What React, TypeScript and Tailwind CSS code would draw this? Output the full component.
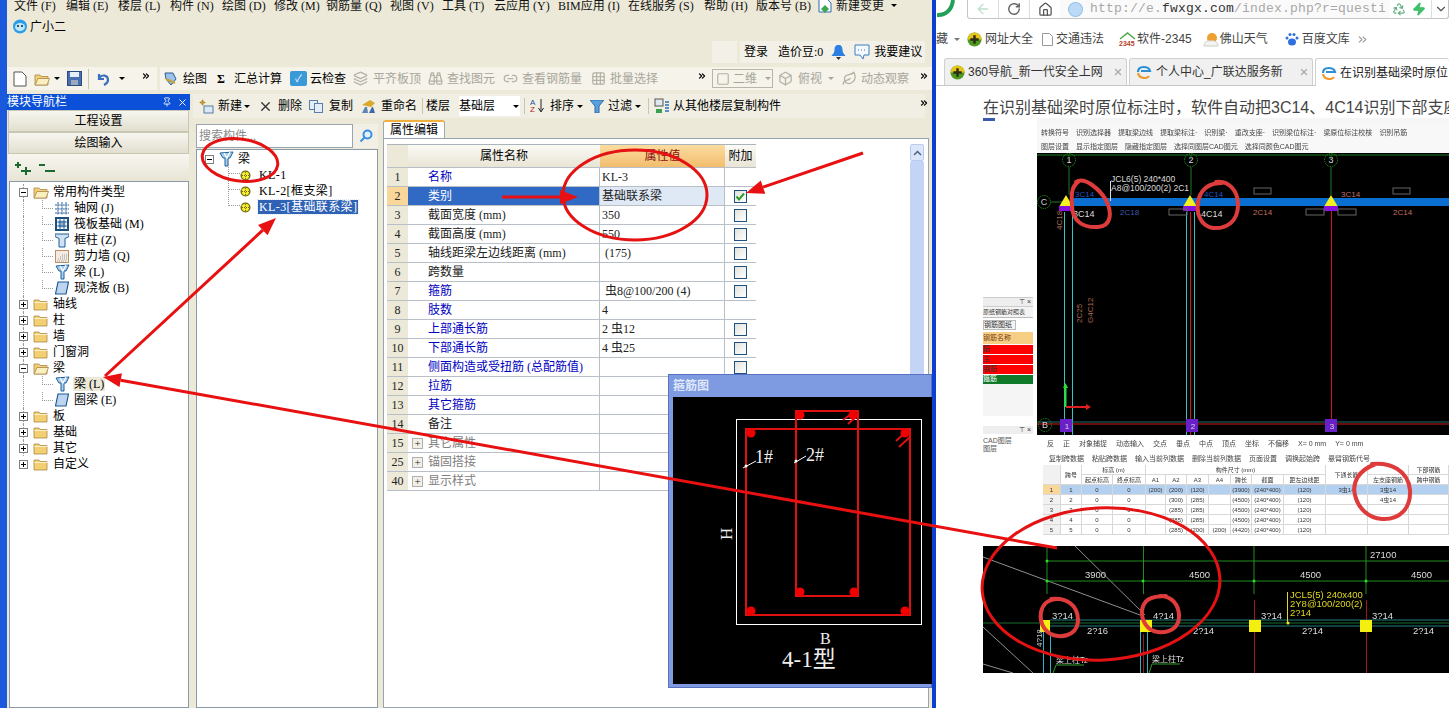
import { ArrowLeft, RotateCw, Home, Zap, Recycle, ChevronDown, Pin, X, ChevronsRight, Layers, Binoculars, Link2, Grid3x3, Box, Leaf, Square } from "lucide-react";

const Caret = ({ className = "" }: { className?: string }) => (
  <span className={`inline-block h-0 w-0 shrink-0 border-x-[3px] border-t-[3px] border-x-transparent border-t-current ${className}`} />
);

const Folder = ({ open = false }: { open?: boolean }) => (
  <svg className="shrink-0" width="16" height="14" viewBox="0 0 16 14">
    <path d="M1 3h5l1 1.500h7v8.500H1z" fill="#f3cf72" stroke="#a8884a" strokeWidth="0.8" />
    {open ? <path d="M1 13l3-6.500h11.500L13 13z" fill="#fbeec0" stroke="#a8884a" strokeWidth="0.8" /> : <path d="M1.500 5.500h13" stroke="#fff3c8" />}
  </svg>
);

const Expander = ({ minus = false }: { minus?: boolean }) => (
  <span className="relative z-10 flex h-[9px] w-[9px] items-center justify-center border border-[#808080] bg-white">
    <span className="absolute h-px w-[5px] bg-black" />
    {!minus && <span className="absolute h-[5px] w-px bg-black" />}
  </span>
);

const BeamIcon = () => (
  <svg width="15" height="16" viewBox="0 0 15 16">
    <path d="M1 2l13-1-3 6H9v8H6V7H4z" fill="#a9d0ee" stroke="#1c5f9e" strokeWidth="1" />
    <path d="M5 2l3 5 3-6" fill="none" stroke="#fff" strokeWidth="1.200" />
  </svg>
);

const GridIcon = () => (
  <svg width="14" height="14" viewBox="0 0 14 14" stroke="#2a5f9e" strokeWidth="1" fill="none">
    <path d="M0 4h14M0 8h14M0 12h14M3 1v13M7 1v13M11 1v13" strokeDasharray="2 .6" />
  </svg>
);

const RaftIcon = () => (
  <svg width="14" height="14" viewBox="0 0 14 14">
    <rect width="14" height="14" fill="#1d4f80" />
    <rect x="2" y="2" width="10" height="10" fill="#fff" />
    <rect x="3.500" y="3.500" width="7" height="7" fill="#8fb3d6" />
    <path d="M5 2v10M9 2v10M2 5h10M2 9h10" stroke="#1d4f80" strokeWidth=".8" />
  </svg>
);

const ColumnIcon = () => (
  <svg width="14" height="15" viewBox="0 0 14 15">
    <path d="M0 1h14v2.500l-4 2V14H4V5.500l-4-2z" fill="#cfe2f5" stroke="#1d5a96" />
  </svg>
);

const WallIcon = () => (
  <svg width="14" height="13" viewBox="0 0 14 13">
    <rect x=".5" y=".5" width="13" height="12" fill="#f4ece2" stroke="#bf8f63" />
    <path d="M2 11h10M3 9h9M5 7h7M7 5h5" stroke="#999" strokeDasharray="1 1" />
  </svg>
);

const SlabIcon = () => (
  <svg width="14" height="14" viewBox="0 0 14 14">
    <path d="M3 1h10.500L11 13H.5z" fill="#bed5f0" stroke="#1d5a96" strokeWidth="1.200" />
  </svg>
);

const Gear = () => (
  <svg width="11" height="11" viewBox="0 0 11 11">
    <circle cx="5.500" cy="5.500" r="5" fill="#6b6b10" />
    <circle cx="5.500" cy="5.500" r="3.700" fill="#f7ec2e" />
    <path d="M5.500 2v7M2 5.500h7" stroke="#6b6b10" strokeDasharray="1 1" />
  </svg>
);

const Logo360 = ({ size = 15 }: { size?: number }) => (
  <svg className="shrink-0" width={size} height={size} viewBox="0 0 16 16">
    <circle cx="8" cy="8" r="7.500" fill="#4e9a1f" />
    <path d="M8 .5a7.500 7.500 0 0 1 7.500 7.500H1A7 7 0 0 1 8 .5z" fill="#e8c51c" />
    <path d="M6.700 3.500h2.600v3.200h3.200v2.600H9.300v3.200H6.700V9.300H3.500V6.700h3.200z" fill="#2d2d1a" />
  </svg>
);

const IeLogo = () => (
  <svg className="shrink-0" width="16" height="14" viewBox="0 0 16 14" fill="none" strokeWidth="2.200">
    <path d="M2 7c0-7 11-6 12-1H5" stroke="#2d8fd6" />
    <path d="M2 8c1 6 9 6 11 3" stroke="#ee9a2c" />
  </svg>
);

const menus = [
  { label: "文件 (F)", w: "w-[52px]" },
  { label: "编辑 (E)", w: "w-[52px]" },
  { label: "楼层 (L)", w: "w-[52px]" },
  { label: "构件 (N)", w: "w-[52px]" },
  { label: "绘图 (D)", w: "w-[52px]" },
  { label: "修改 (M)", w: "w-[52px]" },
  { label: "钢筋量 (Q)", w: "w-[64px]" },
  { label: "视图 (V)", w: "w-[52px]" },
  { label: "工具 (T)", w: "w-[52px]" },
  { label: "云应用 (Y)", w: "w-[64px]" },
  { label: "BIM应用 (I)", w: "w-[70px]" },
  { label: "在线服务 (S)", w: "w-[76px]" },
  { label: "帮助 (H)", w: "w-[52px]" },
  { label: "版本号 (B)", w: "w-[62px]" },
];

type TreeRow = { label: string; kind: "open" | "closed" | "item"; icon?: React.ReactNode; active?: boolean };

const treeRows: TreeRow[] = [
  { label: "常用构件类型", kind: "open" },
  { label: "轴网 (J)", kind: "item", icon: <GridIcon /> },
  { label: "筏板基础 (M)", kind: "item", icon: <RaftIcon /> },
  { label: "框柱 (Z)", kind: "item", icon: <ColumnIcon /> },
  { label: "剪力墙 (Q)", kind: "item", icon: <WallIcon /> },
  { label: "梁 (L)", kind: "item", icon: <BeamIcon /> },
  { label: "现浇板 (B)", kind: "item", icon: <SlabIcon /> },
  { label: "轴线", kind: "closed" },
  { label: "柱", kind: "closed" },
  { label: "墙", kind: "closed" },
  { label: "门窗洞", kind: "closed" },
  { label: "梁", kind: "open" },
  { label: "梁 (L)", kind: "item", icon: <BeamIcon />, active: true },
  { label: "圈梁 (E)", kind: "item", icon: <SlabIcon /> },
  { label: "板", kind: "closed" },
  { label: "基础", kind: "closed" },
  { label: "其它", kind: "closed" },
  { label: "自定义", kind: "closed" },
];

const ModuleTree = () => (
  <div className="h-full bg-white pt-[2px]">
    {treeRows.map((row, i) => (
      <div key={i} className="relative flex h-[16px] items-center">
        {i < treeRows.length - 1 && <span className="absolute left-[13px] top-0 h-full border-l border-dotted border-[#999]" />}
        {row.kind === "item" ? (
          <>
            <span className="absolute left-[32px] top-0 h-[9px] w-[11px] border-b border-l border-dotted border-[#999]" />
            <span className="ml-[44px] flex w-[16px] justify-center">{row.icon}</span>
            <span className={`ml-[3px] px-[1px] ${row.active ? "bg-[#ece9d8]" : ""}`}>{row.label}</span>
          </>
        ) : (
          <>
            <span className="ml-[9px]"><Expander minus={row.kind === "open"} /></span>
            <span className="ml-[5px]"><Folder open={row.kind === "open"} /></span>
            <span className="ml-[4px]">{row.label}</span>
          </>
        )}
      </div>
    ))}
  </div>
);

const NavPanel = () => (
  <div className="flex w-[183px] flex-col">
    <div className="flex h-[16px] items-center justify-between bg-[#0a50d8] pr-[2px] text-white">
      <span>模块导航栏</span>
      <span className="flex items-center gap-[5px]"><Pin size={10} /><X size={11} /></span>
    </div>
    <div className="ml-px mr-[1px] flex h-[22px] items-center justify-center border border-[#c9c6b4] bg-gradient-to-b from-[#f7f6ef] to-[#e2dfcf]">工程设置</div>
    <div className="ml-px mr-[1px] flex h-[22px] items-center justify-center border border-[#c9c6b4] bg-gradient-to-b from-[#f7f6ef] to-[#e2dfcf]">绘图输入</div>
    <div className="ml-px mr-[1px] flex h-[27px] items-center gap-[8px] bg-gradient-to-b from-[#f7f6ef] to-[#e8e5d6] pl-[7px]">
      <svg width="16" height="14" viewBox="0 0 16 14" stroke="#1b6a2f" strokeWidth="2"><path d="M0 4h6M3 1v6M6 10h10M11 6v8" /></svg>
      <svg width="16" height="14" viewBox="0 0 16 14" stroke="#1b6a2f" strokeWidth="2"><path d="M0 4h6M6 10h10" /></svg>
    </div>
    <div className="ml-[2px] mr-[1px] min-h-0 flex-1 border border-[#8a9aa8]">
      <ModuleTree />
    </div>
  </div>
);

const ComponentTree = () => (
  <div className="flex w-[182px] flex-col pt-[4px]">
    <div className="flex h-[24px]">
      <div className="flex flex-1 items-center border border-[#9aa5b1] bg-white pl-[2px] text-[#8a8a8a]">搜索构件...</div>
      <div className="flex w-[25px] items-center justify-center bg-[#f2f0e6]">
        <svg width="14" height="14" viewBox="0 0 14 14" fill="none" stroke="#3a8fe0" strokeWidth="2"><circle cx="8.500" cy="5.500" r="4" fill="#dff0fb" /><path d="M5.500 8.500L1.500 12.500" /></svg>
      </div>
    </div>
    <div className="mt-[1px] min-h-0 flex-1 border border-[#8a9aa8] bg-white pl-[8px] pt-[1px]">
      <div className="flex h-[16px] items-center">
        <Expander minus />
        <span className="ml-[5px]"><BeamIcon /></span>
        <span className="ml-[4px]">梁</span>
      </div>
      {["KL-1", "KL-2[框支梁]", "KL-3[基础联系梁]"].map((name, i) => (
        <div key={name} className="relative flex h-[16px] items-center">
          <span className="absolute left-[23px] top-[-8px] h-[15px] w-[14px] border-b border-l border-dotted border-[#999]" />
          <span className="ml-[35px]"><Gear /></span>
          <span className={`ml-[7px] px-[1px] tracking-[0.4px] ${i === 2 ? "bg-[#2f62b5] text-white outline-1 outline-dotted outline-[#dfe8f5]" : ""}`}>{name}</span>
        </div>
      ))}
    </div>
  </div>
);

type PropRow = { no: string; name: string; value?: string; check?: "on" | "off"; tone: "blue" | "dark" | "gray"; plus?: boolean };

const propRows: PropRow[] = [
  { no: "1", name: "名称", value: "KL-3", tone: "blue" },
  { no: "2", name: "类别", value: "基础联系梁", check: "on", tone: "dark" },
  { no: "3", name: "截面宽度 (mm)", value: "350", check: "off", tone: "dark" },
  { no: "4", name: "截面高度 (mm)", value: "550", check: "off", tone: "dark" },
  { no: "5", name: "轴线距梁左边线距离 (mm)", value: " (175)", check: "off", tone: "dark" },
  { no: "6", name: "跨数量", check: "off", tone: "dark" },
  { no: "7", name: "箍筋", value: " 虫8@100/200 (4)", check: "off", tone: "blue" },
  { no: "8", name: "肢数", value: "4", tone: "blue" },
  { no: "9", name: "上部通长筋", value: "2 虫12", check: "off", tone: "blue" },
  { no: "10", name: "下部通长筋", value: "4 虫25", check: "off", tone: "blue" },
  { no: "11", name: "侧面构造或受扭筋 (总配筋值)", check: "off", tone: "blue" },
  { no: "12", name: "拉筋", tone: "blue" },
  { no: "13", name: "其它箍筋", tone: "blue" },
  { no: "14", name: "备注", tone: "dark" },
  { no: "15", name: "其它属性", tone: "gray", plus: true },
  { no: "25", name: "锚固搭接", tone: "gray", plus: true },
  { no: "40", name: "显示样式", tone: "gray", plus: true },
];

const toneClass = { blue: "text-[#0000c0]", dark: "text-[#222]", gray: "text-[#808080]" };

const CheckBox = ({ on }: { on: boolean }) => (
  <span className="flex h-[13px] w-[13px] items-center justify-center border border-[#1c5180] bg-gradient-to-br from-[#e2e2dc] to-white">
    {on && <svg width="11" height="11" viewBox="0 0 11 11" fill="none" stroke="#2f9e2a" strokeWidth="2"><path d="M1.500 5.500l2.500 3 5-6" /></svg>}
  </span>
);

const PropTable = () => (
  <div className="w-[369px] border-t border-[#aab4bd]">
    <div className="flex h-[23px] border-b border-[#b8bfc6]">
      <div className="w-[21px] bg-[#ece9d8]" />
      <div className="flex w-[192px] items-center justify-center bg-gradient-to-b from-[#fbfaf4] to-[#e8e5d6]">属性名称</div>
      <div className="flex w-[125px] items-center justify-center bg-gradient-to-b from-[#fbdc9f] to-[#f2bd6d] text-[#8a1010]">属性值</div>
      <div className="flex w-[31px] items-center justify-center bg-gradient-to-b from-[#fbfaf4] to-[#e8e5d6]">附加</div>
    </div>
    {propRows.map((row) => {
      const selected = row.no === "2";
      return (
        <div key={row.no} className="flex h-[19px] border-b border-[#b8bfc6]">
          <div className={`flex w-[21px] items-center justify-center text-[#222] ${selected ? "bg-[#f9d79b]" : "bg-[#ece9d8]"}`}>{row.no}</div>
          <div className={`flex w-[192px] items-center border-r border-[#b8bfc6] ${selected ? "bg-[#316ac5] text-white" : toneClass[row.tone]}`}>
            {row.plus ? (
              <span className="ml-[4px] mr-[5px] flex h-[11px] w-[11px] items-center justify-center border border-[#b0b0b0] bg-[#f1efe6] text-[11px] leading-none text-[#222]">+</span>
            ) : <span className="w-[20px]" />}
            {row.name}
          </div>
          <div className={`flex w-[125px] items-center whitespace-pre border-r border-[#b8bfc6] pl-[2px] text-[#222] ${selected ? "bg-[#dfe9f6]" : ""}`}>{row.value}</div>
          <div className="flex w-[31px] items-center justify-center">{row.check && <CheckBox on={row.check === "on"} />}</div>
        </div>
      );
    })}
  </div>
);

const PropertyPanel = () => (
  <div className="ml-[5px] flex w-[546px] flex-col">
    <div className="flex h-[18px] w-[62px] items-center justify-center rounded-t-[3px] border-x border-t-2 border-x-[#a0a8ad] border-t-[#f0b040] bg-white">属性编辑</div>
    <div className="flex min-h-0 flex-1 border border-[#98a5b0] bg-white pl-[3px] pt-[5px]">
      <PropTable />
      <div className="ml-[154px] flex w-[14px] flex-col">
        <div className="flex h-[17px] items-center justify-center rounded-[2px] border border-[#b8ccec] bg-[#dbe6fa]">
          <svg width="9" height="6" viewBox="0 0 9 6" fill="none" stroke="#4d6185" strokeWidth="1.500"><path d="M1 5l3.500-3.500L8 5" /></svg>
        </div>
        <div className="h-[520px] rounded-[2px] bg-[#c3d4f7]" />
      </div>
    </div>
  </div>
);

const greyIcon = "shrink-0 text-[#b4b2a6]";

const MainToolbar = () => (
  <div className="flex h-[23px] items-center whitespace-nowrap">
    <div className="flex h-full w-[150px] items-center bg-[#f5f3ea] pl-[6px]">
      <svg className="shrink-0" width="14" height="16" viewBox="0 0 14 16"><path d="M1 1h8l4 4v10H1z" fill="#fff" stroke="#555" /></svg>
      <span className="ml-[7px]"><Folder open /></span>
      <Caret className="ml-[4px] text-black" />
      <svg className="ml-[7px] shrink-0" width="15" height="15" viewBox="0 0 15 15"><rect x=".5" y=".5" width="14" height="14" fill="#4a6fb0" stroke="#2b4a80" /><rect x="3" y="1" width="9" height="5" fill="#e8eef8" /><rect x="4" y="9" width="7" height="5" fill="#9ab" /></svg>
      <span className="ml-[6px] h-[20px] border-l border-[#c8c5b2]" />
      <svg className="ml-[7px] shrink-0" width="14" height="14" viewBox="0 0 14 14" fill="none" stroke="#3a6fc0" strokeWidth="2.200"><path d="M3 2v5h5M3 6c3-4 9-3 9 2 0 3-2 4-4 5" /></svg>
      <Caret className="ml-[9px] text-black" />
      <ChevronsRight size={10} strokeWidth={3} className="-mt-[6px] ml-[16px] shrink-0 text-black" />
    </div>
    <div className="ml-[3px] flex h-full w-[547px] items-center bg-[#f5f3ea] pl-[3px]">
      <svg className="shrink-0" width="15" height="15" viewBox="0 0 15 15"><path d="M2 2h8l3 6-5 6-5-6z" fill="#9cc3e8" stroke="#2d5f96" /><path d="M3 8l9 4" stroke="#c8a038" strokeWidth="2" /></svg>
      <span className="ml-[5px]">绘图</span>
      <span className="ml-[10px] w-[8px] font-bold">Σ</span>
      <span className="ml-[9px]">汇总计算</span>
      <span className="ml-[8px] flex h-[15px] w-[17px] shrink-0 items-center justify-center rounded-[2px] bg-[#3a9ad8] text-[10px] text-white">✓</span>
      <span className="ml-[3px]">云检查</span>
      <Layers size={15} className={`ml-[7px] ${greyIcon}`} />
      <span className="ml-[5px] text-[#a8a69a]">平齐板顶</span>
      <Binoculars size={15} className={`ml-[7px] ${greyIcon}`} />
      <span className="ml-[4px] text-[#a8a69a]">查找图元</span>
      <Link2 size={15} className={`ml-[8px] ${greyIcon}`} />
      <span className="ml-[4px] text-[#a8a69a]">查看钢筋量</span>
      <Grid3x3 size={15} className={`ml-[9px] ${greyIcon}`} />
      <span className="ml-[4px] text-[#a8a69a]">批量选择</span>
      <ChevronsRight size={10} strokeWidth={3} className="-mt-[6px] ml-[39px] shrink-0 text-black" />
    </div>
    <div className="flex h-full flex-1 items-center bg-[#f5f3ea] pl-[5px] text-[#a8a69a]">
      <span className="flex h-[19px] w-[61px] shrink-0 items-center border border-[#b8b6a8] pl-[3px]">
        <Square size={14} className={greyIcon} />
        <span className="ml-[3px]">二维</span>
        <Caret className="ml-[8px]" />
      </span>
      <Box size={15} className={`ml-[5px] ${greyIcon}`} />
      <span className="ml-[5px]">俯视</span>
      <Caret className="ml-[6px]" />
      <Leaf size={15} className={`ml-[8px] ${greyIcon}`} />
      <span className="ml-[4px]">动态观察</span>
      <ChevronsRight size={10} strokeWidth={3} className="-mt-[6px] ml-[10px] shrink-0 text-black" />
    </div>
  </div>
);

const SecondToolbar = () => (
  <div className="flex h-[24px] w-[732px] items-center whitespace-nowrap bg-[#f1efe4] pl-[5px]">
    <svg className="shrink-0" width="16" height="16" viewBox="0 0 16 16"><path d="M2 4h2V2h1v2h2v1H5v2H4V5H2z" fill="#d8a820" stroke="#a07810" strokeWidth=".6" /><rect x="6" y="8" width="9" height="7" fill="#dbe8f7" stroke="#5a7aa0" /></svg>
    <span className="ml-[4px]">新建</span>
    <Caret className="ml-[2px] text-black" />
    <X size={15} strokeWidth={2.200} className="ml-[8px] shrink-0 text-[#333]" />
    <span className="ml-[5px]">删除</span>
    <svg className="ml-[7px] shrink-0" width="14" height="13" viewBox="0 0 14 13" fill="#e4edf8" stroke="#5a7ea8"><rect x=".5" y=".5" width="8" height="9" /><rect x="5.500" y="3.500" width="8" height="9" /></svg>
    <span className="ml-[6px]">复制</span>
    <svg className="ml-[8px] shrink-0" width="15" height="15" viewBox="0 0 15 15"><path d="M1 6l8-5 5 3-4 4z" fill="#d9a92c" /><path d="M1 14l3-6h2l1 6z" fill="#5a86b8" /><path d="M8 14l3-6h1l2 6z" fill="#3a6aa8" /></svg>
    <span className="ml-[5px]">重命名</span>
    <span className="ml-[5px] h-[16px] border-l border-[#c8c5b2]" />
    <span className="ml-[3px]">楼层</span>
    <span className="ml-[9px] flex h-[20px] w-[61px] shrink-0 items-center bg-white">基础层<Caret className="ml-[18px] text-black" /></span>
    <span className="ml-[4px] h-[16px] border-l border-[#c8c5b2]" />
    <svg className="ml-[5px] shrink-0" width="14" height="16" viewBox="0 0 14 16"><text x="0" y="7" fontSize="8" fill="#1d4ea0" fontFamily="Liberation Sans">A</text><text x="0" y="14" fontSize="8" fill="#b02020" fontFamily="Liberation Sans">Z</text><path d="M11 1v12M8.500 10l2.500 4 2.500-4" stroke="#222" fill="none" /></svg>
    <span className="ml-[6px]">排序</span>
    <Caret className="ml-[3px] text-black" />
    <svg className="ml-[7px] shrink-0" width="14" height="13" viewBox="0 0 14 13"><path d="M0 0h14L9 6v7H5V6z" fill="#5aa0dc" stroke="#2b6aa8" /></svg>
    <span className="ml-[4px]">过滤</span>
    <Caret className="ml-[3px] text-black" />
    <span className="ml-[7px] h-[16px] border-l border-[#c8c5b2]" />
    <svg className="ml-[5px] shrink-0" width="16" height="16" viewBox="0 0 16 16"><rect x="1" y="1" width="8" height="7" fill="#dfe8ef" stroke="#555" /><path d="M2 11h6v4H2z" fill="#3aa050" /><path d="M11 4h4M11 7h4M11 10h4M11 13h4" stroke="#2f6fb5" strokeWidth="1.500" /></svg>
    <span className="ml-[3px]">从其他楼层复制构件</span>
    <ChevronsRight size={10} strokeWidth={3} className="-mt-[6px] ml-[138px] shrink-0 text-black" />
  </div>
);

const AppWindow = () => (
  <div className="flex h-[708px] w-[932px] flex-col border-l-[7px] border-[#1a58dc] bg-[#ece9d8] text-[12px] leading-[14px]">
    <div className="-mt-[2px] flex h-[15px] items-center whitespace-nowrap pl-[7px] text-[#111]">
      {menus.map((m) => <span key={m.label} className={m.w}>{m.label}</span>)}
      <span className="flex items-center gap-[4px]">
        <svg width="14" height="15" viewBox="0 0 14 15"><path d="M1 1h8l4 4v9H1z" fill="#fff" stroke="#2d6fb0" /><path d="M7 7l4 4-4 4-4-4z" fill="#3aa850" /></svg>
        新建变更
      </span>
      <Caret className="ml-[7px] text-black" />
    </div>
    <div className="mt-[5px] flex h-[17px] items-center pl-[5px]">
      <svg width="16" height="15" viewBox="0 0 16 15"><circle cx="8" cy="7.500" r="7" fill="#2c9be8" /><ellipse cx="8" cy="8" rx="5" ry="4" fill="#bfe8fb" /><circle cx="6" cy="7" r="1" fill="#123" /><circle cx="10" cy="7" r="1" fill="#123" /></svg>
      <span className="ml-[2px]">广小二</span>
    </div>
    <div className="mt-[6px] flex h-[22px] items-center pl-[705px]">
      <span className="h-full w-[25px] bg-[#f3f1e7]" />
      <div className="ml-[3px] flex h-full w-[185px] items-center whitespace-nowrap bg-[#f3f1e7] pl-[4px]">
        <span>登录</span>
        <span className="ml-[10px]">造价豆:0</span>
        <svg className="ml-[8px]" width="15" height="16" viewBox="0 0 15 16"><path d="M7.500 1c3 0 4 2 4 5 0 3 2 4 3 6H.5c1-2 3-3 3-6 0-3 1-5 4-5z" fill="#2a7fe0" /><path d="M5 13h5l-2.500 3z" fill="#333" /></svg>
        <svg className="ml-[8px]" width="16" height="16" viewBox="0 0 16 16" fill="#f3f8fd" stroke="#3d7cc0"><path d="M1 1h14v10H10l-1 4-3-4H1z" /><path d="M4 6h1M7 6h1M10 6h1" /></svg>
        <span className="ml-[4px]">我要建议</span>
      </div>
    </div>
    <div className="mt-[4px]"><MainToolbar /></div>
    <div className="mt-[4px] flex min-h-0 flex-1">
      <NavPanel />
      <div className="ml-[3px] flex min-w-0 flex-1 flex-col">
        <SecondToolbar />
        <div className="mt-[2px] flex min-h-0 flex-1 pl-[3px]">
          <ComponentTree />
          <PropertyPanel />
        </div>
      </div>
    </div>
  </div>
);

const CadTop = () => (
  <svg className="block" width="412" height="282" viewBox="1037 153 412 282" fontFamily="Liberation Sans">
    <rect x="1037" y="153" width="412" height="282" fill="#000" />
    <path d="M1037 155h412" stroke="#1f7a1f" />
    {[[1069, "1"], [1191, "2"], [1331, "3"]].map(([x, t]) => (
      <g key={t as string}>
        <circle cx={x as number} cy="160" r="6.500" fill="none" stroke="#1f8a1f" strokeDasharray="1.500 1" />
        <text x={x as number} y="163" fontSize="9" fill="#ddd" textAnchor="middle">{t}</text>
        <path d={`M${x} 155v4M${x} 167v28`} stroke="#1f7a1f" />
      </g>
    ))}
    <circle cx="1044" cy="202" r="6.500" fill="none" stroke="#1f8a1f" strokeDasharray="1.500 1" />
    <text x="1044" y="205" fontSize="9" fill="#ccc" textAnchor="middle">C</text>
    <path d="M1051 202h16" stroke="#1f7a1f" />
    <rect x="1070" y="198" width="379" height="8" fill="#0a6fd0" />
    <path d="M1064.500 212v223M1072.500 212v223M1186.500 212v223M1194.500 212v223" stroke="#32c4c4" />
    <path d="M1190.500 212v223M1331.500 206v223" stroke="#d01818" />
    {[1066, 1190, 1331].map((x) => (
      <g key={x}>
        <rect x={x - 7} y="206" width="14" height="5" fill="#8a10e0" />
        <path d={`M${x} 195l6.500 11h-13z`} fill="#f5f020" />
      </g>
    ))}
    <text x="1111" y="182" fontSize="8.500" fill="#ddd">JCL6(5) 240*400</text>
    <text x="1111" y="191" fontSize="8.500" fill="#ddd">A8@100/200(2) 2C1</text>
    <path d="M1110.500 181v20" stroke="#ddd" />
    <text x="1075" y="197" fontSize="8" fill="#1e55c8">3C14</text>
    <text x="1204" y="197" fontSize="8" fill="#1e55c8">4C14</text>
    <text x="1341" y="197" fontSize="8" fill="#c07060">3C14</text>
    <text x="1073" y="217" fontSize="9" fill="#ddd">3C14</text>
    <text x="1201" y="217" fontSize="9" fill="#ddd">4C14</text>
    <text x="1120" y="215" fontSize="8" fill="#3a5ab0">2C18</text>
    <text x="1253" y="215" fontSize="8" fill="#c07060">2C14</text>
    <text x="1393" y="215" fontSize="8" fill="#c07060">2C14</text>
    {[[1169, 209, 18], [1254, 188, 17], [1306, 209, 18], [1338, 209, 18], [1393, 188, 17]].map(([x, y, w]) => (
      <rect key={`${x}-${y}`} x={x} y={y} width={w} height="6" fill="none" stroke="#666" />
    ))}
    <text transform="translate(1062 230) rotate(-90)" fontSize="8" fill="#b06858">4C18</text>
    <text transform="translate(1082 323) rotate(-90)" fontSize="8" fill="#b06858">2C25</text>
    <text transform="translate(1093 323) rotate(-90)" fontSize="8" fill="#b06858">G4C12</text>
    <path d="M1065.500 407v-22" stroke="#28e030" strokeWidth="2" />
    <path d="M1063 388l2.500-5 2.500 5z" fill="#28e030" />
    <path d="M1066 407h22" stroke="#e02020" strokeWidth="2" />
    <path d="M1086 404l5 3-5 3z" fill="#e02020" />
    <path d="M1037 424h412" stroke="#d01818" />
    <path d="M1037 422h412" stroke="#1f6a6a" />
    <circle cx="1045" cy="425" r="6.500" fill="none" stroke="#1f8a1f" strokeDasharray="1.500 1" />
    <text x="1045" y="428" fontSize="9" fill="#ccc" textAnchor="middle">B</text>
    {[[1066, "1"], [1192, "2"], [1331, "3"]].map(([x, t]) => (
      <g key={t as string}>
        <rect x={(x as number) - 6} y="419" width="12" height="13" fill="#6a20c8" />
        <text x={(x as number) + 1} y="429" fontSize="8" fill="#ddd" textAnchor="middle">{t}</text>
      </g>
    ))}
  </svg>
);

const CadBottom = () => (
  <svg className="block" width="466" height="127" viewBox="983 546 466 127" fontFamily="Liberation Sans">
    <rect x="983" y="546" width="466" height="127" fill="#000" />
    <path d="M983 557l157 58M1075 546l70 69M983 627l50 46M983 664l30 9" stroke="#ccc" strokeWidth=".7" />
    <path d="M1047 546v48M1143.500 546v48M1254 546v48M1366 546v48M1047 561h402M1047 581h402" stroke="#28b028" strokeWidth=".8" />
    {[1047, 1143, 1254, 1366].map((x) => <circle key={x} cx={x} cy="581" r="1.500" fill="#28e028" />)}
    <circle cx="1047" cy="561" r="1.500" fill="#28e028" />
    <path d="M983 623h466" stroke="#1f8a3a" strokeWidth=".8" />
    <path d="M1050 620h399M1050 626h399" stroke="#2c9ca0" strokeWidth=".8" />
    <path d="M1254.500 600v73M1366.500 600v73M1143.500 634v39" stroke="#a01818" />
    <path d="M1043.500 632v41M1050.500 632v41M1140.500 632v41M1147.500 632v41" stroke="#32b4c4" />
    {[[1040, 10], [1140, 12], [1249, 12], [1360, 12]].map(([x, w]) => <rect key={x} x={x} y="620" width={w} height="12" fill="#f5ef10" />)}
    {[[1085, 578, "3900"], [1189, 578, "4500"], [1300, 578, "4500"], [1411, 578, "4500"], [1370, 558, "27100"], [1052, 619, "3?14"], [1153, 619, "4?14"], [1261, 619, "3?14"], [1372, 619, "3?14"], [1087, 634, "2?16"], [1193, 634, "2?14"], [1302, 634, "2?14"], [1413, 634, "2?14"]].map(([x, y, t]) => (
      <text key={`${x}-${t}`} x={x as number} y={y as number} fontSize="9.500" fill="#ddd">{t}</text>
    ))}
    <path d="M1287.500 592v30" stroke="#e0d820" />
    <circle cx="1288" cy="623" r="1.500" fill="#f0e820" />
    <text x="1290" y="598" fontSize="9.500" fill="#e0d820">JCL5(5) 240x400</text>
    <text x="1290" y="607" fontSize="9.500" fill="#e0d820">2Y8@100/200(2)</text>
    <text x="1290" y="616" fontSize="9.500" fill="#e0d820">2?14</text>
    <text transform="translate(1042 647) rotate(-90)" fontSize="8" fill="#ccc">4?18</text>
    <text x="1056" y="663" fontSize="8" fill="#ddd" fontFamily="Noto Sans CJK SC">梁上柱Tz</text>
    <text x="1152" y="662" fontSize="8" fill="#ddd" fontFamily="Noto Sans CJK SC">梁上柱Tz</text>
    <path d="M1056 665h28M1056 665l-3 8M1152 664h28M1152 664l-3 9" stroke="#28a028" fill="none" />
  </svg>
);

const EmbedTable = () => {
  const cols = "grid-cols-[18px_21px_31px_33px_20px_21px_22px_22px_21px_32px_42px_42px_41px_40px]";
  const cell = "flex items-center justify-center overflow-hidden whitespace-nowrap border-b border-r border-[#d8d8d8]";
  const rows = [
    ["1", "1", "0", "0", "(200)", "(200)", "(120)", "", "(3900)", "(240*400)", "(120)", "3虫14", "3虫14", ""],
    ["2", "2", "0", "0", "", "(300)", "(285)", "", "(4500)", "(240*400)", "(120)", "", "4虫14", ""],
    ["3", "3", "0", "0", "", "(285)", "(285)", "", "(4500)", "(240*400)", "(120)", "", "", ""],
    ["4", "4", "0", "0", "", "(285)", "(285)", "", "(4500)", "(240*400)", "(120)", "", "", ""],
    ["5", "5", "0", "0", "", "(285)", "(200)", "(200)", "(4420)", "(240*400)", "(120)", "", "", ""],
  ];
  return (
    <div className={`grid ${cols} auto-rows-[10px] text-[6px] leading-none text-[#333]`}>
      <div className={`${cell} row-span-2 bg-[#f1f1f1]`} />
      <div className={`${cell} row-span-2`}>跨号</div>
      <div className={`${cell} col-span-2`}>标高 (m)</div>
      <div className={`${cell} col-span-7`}>构件尺寸 (mm)</div>
      <div className={`${cell} row-span-2`}>下通长筋</div>
      <div className={cell} />
      <div className={cell}>下部钢筋</div>
      {["起点标高", "终点标高", "A1", "A2", "A3", "A4", "跨长", "截面", "距左边线距", "左支座钢筋", "跨中钢筋"].map((h) => <div key={h} className={cell}>{h}</div>)}
      {rows.map((row, r) => row.map((c, i) => (
        <div key={`${r}-${i}`} className={`${cell} ${r === 0 ? (i === 0 ? "bg-[#f9d79b]" : "bg-[#b4d0f0]") : i === 0 ? "bg-[#f1f1f1]" : ""}`}>{c}</div>
      )))}
    </div>
  );
};

const SmallTool = ({ items, className = "" }: { items: string[]; className?: string }) => (
  <div className={`flex items-center whitespace-nowrap text-[7px] text-[#444] ${className}`}>
    {items.map((t) => <span key={t}>{t}</span>)}
  </div>
);

const SidePanel = () => (
  <div className="w-[50px] text-[7px] leading-[8px] text-[#333]">
    <div className="flex h-[10px] items-center justify-end border-y border-[#ccc] bg-[#eee] pr-[2px]">⊤ ×</div>
    <div className="flex h-[11px] items-center whitespace-nowrap border-b border-[#bbb] bg-[#f4f4f4] text-[6px]">原纸钢筋对照表</div>
    <div className="flex h-[14px] items-center"><span className="border border-[#bbb] bg-[#f4f4f4] pr-[3px]">钢筋图纸</span></div>
    <div className="flex h-[12px] items-center bg-[#f6cf85] text-[#7a3a10]">钢筋名称</div>
    <div className="mt-[1px] h-[9px] bg-[#ff0000]">筋</div>
    <div className="mt-[1px] h-[9px] bg-[#ff0000]">主</div>
    <div className="mt-[1px] h-[9px] bg-[#ff0000]">钢筋</div>
    <div className="mt-[1px] h-[9px] bg-[#0f7a2a] text-white">箍筋</div>
    <div className="h-[32px] bg-[#f5f5f5]" />
    <div className="mt-[10px] flex h-[8px] items-center justify-end bg-[#eee] pr-[2px]">⊤ ×</div>
    <div className="mt-[3px] text-[#555]">CAD图层<br />图层</div>
  </div>
);

const Browser = () => (
  <div className="flex h-[708px] w-[513px] flex-col overflow-hidden bg-white font-['Liberation_Sans','Noto_Sans_CJK_SC',sans-serif] text-[12px] leading-[14px] text-[#333]">
    <div className="flex h-[20px] items-start">
      <svg className="ml-[1px] shrink-0" width="20" height="20" viewBox="0 0 20 20" fill="none" stroke="#22a05a" strokeWidth="4"><path d="M0 15c8 1 15-5 16-15" /></svg>
      <div className="ml-[10px] flex h-[19px] flex-1 items-center rounded-b-[3px] border-x border-b border-[#c4c4c4]">
        <span className="flex h-full w-[31px] items-center justify-center border-r border-[#ddd]"><ArrowLeft size={16} className="text-[#bfe0cc]" /></span>
        <span className="flex h-full w-[31px] items-center justify-center border-r border-[#ddd]"><RotateCw size={14} strokeWidth={2.500} className="text-[#666]" /></span>
        <span className="flex h-full w-[30px] items-center justify-center"><Home size={15} className="text-[#555]" /></span>
        <span className="flex h-full flex-1 items-center whitespace-nowrap bg-[#fafafa] pl-[9px] font-['Liberation_Mono',monospace] text-[13px] tracking-[0.2px] text-[#a8a8a8]">
          <span className="mr-[8px] inline-block h-[13px] w-[13px] rounded-full bg-[#bcdaf5] ring-1 ring-[#8fc0ea]" />
          http://e.<span className="text-[#333]">fwxgx.com</span>/index.php?r=questi
        </span>
        <Recycle size={14} className="ml-[2px] shrink-0 text-[#5fae80]" />
        <Zap size={14} fill="#3fc06a" className="ml-[6px] shrink-0 text-[#3fc06a]" />
        <span className="ml-[5px] h-full border-l border-[#ddd]" />
        <ChevronDown size={14} className="ml-[2px] shrink-0 text-[#555]" />
      </div>
    </div>
    <div className="mt-[10px] flex h-[18px] items-center whitespace-nowrap text-[#444]">
      <span>藏</span>
      <Caret className="ml-[6px] text-[#777]" />
      <span className="ml-[7px]"><Logo360 /></span>
      <span className="ml-[3px]">网址大全</span>
      <svg className="ml-[9px]" width="11" height="13" viewBox="0 0 11 13" fill="#fff" stroke="#999"><path d="M.5.5h7l3 3v9H.5z" /></svg>
      <span className="ml-[3px]">交通违法</span>
      <svg className="ml-[15px]" width="17" height="16" viewBox="0 0 17 16" fill="none"><path d="M1 8l7.500-6L16 8" stroke="#4aa84a" strokeWidth="1.500" /><text x="0" y="15" fontSize="7" fill="#b8401f" fontFamily="Liberation Sans" fontWeight="700">2345</text></svg>
      <span className="ml-[1px]">软件-2345</span>
      <svg className="ml-[11px]" width="16" height="15" viewBox="0 0 16 15"><circle cx="9" cy="6" r="5" fill="#f0a030" /><path d="M1 14c0-4 4-6 7-5 3-1 7 1 7 5z" fill="#f4f4f0" stroke="#ccc" /></svg>
      <span className="ml-[1px]">佛山天气</span>
      <svg className="ml-[17px]" width="14" height="14" viewBox="0 0 14 14" fill="#2f6fe0"><ellipse cx="7" cy="10" rx="4" ry="3.500" /><circle cx="2" cy="6" r="1.500" /><circle cx="5" cy="2.500" r="1.500" /><circle cx="9" cy="2.500" r="1.500" /><circle cx="12" cy="6" r="1.500" /></svg>
      <span className="ml-[3px]">百度文库</span>
      <ChevronsRight size={13} className="ml-[6px] text-[#999]" />
    </div>
    <div className="mt-[10px] flex h-[28px] items-end whitespace-nowrap border-b border-[#c8c8c8] pl-[8px]">
      <div className="flex h-[27px] w-[183px] items-center rounded-t-[3px] border-x border-t border-[#cfcfcf] bg-[#f0f0f0] pl-[5px]">
        <Logo360 />
        <span className="ml-[3px] w-[140px]">360导航_新一代安全上网</span>
        <X size={10} strokeWidth={3} className="ml-[5px] shrink-0 text-[#aaa]" />
      </div>
      <div className="ml-[2px] flex h-[27px] w-[184px] items-center rounded-t-[3px] border-x border-t border-[#cfcfcf] bg-[#f0f0f0] pl-[6px]">
        <IeLogo />
        <span className="ml-[4px] w-[134px]">个人中心_广联达服务新</span>
        <X size={10} strokeWidth={3} className="ml-[9px] shrink-0 text-[#aaa]" />
      </div>
      <div className="-mb-px ml-[2px] flex h-[28px] flex-1 items-center rounded-t-[3px] border-l border-t border-[#cfcfcf] bg-white pl-[5px] text-[#222]">
        <IeLogo />
        <span className="ml-[3px]">在识别基础梁时原位</span>
      </div>
    </div>
    <div className="mt-[11px] h-[21px] whitespace-nowrap pl-[47px] text-[16px] leading-[21px] text-[#444]">
      在识别基础梁时原位标注时，软件自动把3C14、4C14识别下部支座
    </div>
    <div className="flex h-[428px]">
      <div className="w-[101px] pl-[47px]">
        <div className="h-[3px] w-[12px] bg-[#3a5ab0]" />
        <div className="mt-[176px]"><SidePanel /></div>
      </div>
      <div className="w-[412px] blur-[0.3px]">
        <div className="h-[7px] bg-[#f6f6f6]" />
        <SmallTool className="h-[15px] gap-[7px] bg-[#f8f8f8] pl-[4px]" items={["转换符号", "识别选择器", "提取梁边线", "提取梁标注·", "识别梁·", "重改支座·", "识别梁位标注·", "梁原位标注校核", "识别吊筋"]} />
        <SmallTool className="h-[13px] gap-[7px] bg-[#f8f8f8] pl-[4px]" items={["图层设置", "显示指定图层", "隐藏指定图层", "选择同图层CAD图元", "选择同颜色CAD图元"]} />
        <CadTop />
        <SmallTool className="h-[17px] gap-[9px] pl-[10px]" items={["反", "正", "对象捕捉", "动态输入", "交点", "垂点", "中点", "顶点", "坐标", "不偏移", "X= 0 mm", "Y= 0 mm"]} />
        <SmallTool className="h-[13px] gap-[8px] pl-[12px]" items={["复制跨数据", "粘贴跨数据", "输入当前列数据", "删除当前列数据", "页面设置", "调换起始跨", "悬臂钢筋代号"]} />
        <div className="pl-[6px]"><EmbedTable /></div>
      </div>
    </div>
    <div className="pl-[47px] blur-[0.3px]"><CadBottom /></div>
  </div>
);

const StirrupPopup = () => (
  <div className="absolute left-[668px] top-[374px] z-20 flex h-[314px] w-[264px] flex-col border border-[#5a70c0] bg-[#7e9ae0] px-[4px] pb-[3px]">
    <div className="flex h-[22px] items-center text-[12px] font-bold text-[#dfe7fb]">箍筋图</div>
    <svg className="block flex-1" width="259" height="287" viewBox="673 397 259 287" fontFamily="Liberation Serif">
      <rect x="673" y="397" width="259" height="287" fill="#000" />
      <rect x="736.500" y="419.500" width="185" height="205" fill="none" stroke="#fff" />
      <g fill="none" stroke="#e01010" strokeWidth="2">
        <rect x="746" y="429" width="164" height="186" />
        <rect x="796" y="411" width="62" height="185" />
        <path d="M896 441l12-11M899 447l11-10M843 420l12-9M848 424l9-8" />
      </g>
      {[[751, 433], [905, 433], [751, 611], [905, 611], [800, 415], [853, 415], [800, 592], [854, 592]].map(([x, y]) => (
        <circle key={`${x}-${y}`} cx={x} cy={y} r="4.500" fill="#f00000" />
      ))}
      <path d="M743 468l13-7M794 463l12-7" stroke="#fff" />
      <circle cx="746" cy="466" r="1.500" fill="#fff" />
      <circle cx="796" cy="461" r="1.500" fill="#fff" />
      <text x="755" y="463" fontSize="18" fill="#eee">1#</text>
      <text x="806" y="461" fontSize="18" fill="#eee">2#</text>
      <text transform="translate(732 540) rotate(-90)" fontSize="17" fill="#eee">H</text>
      <text x="820" y="644" fontSize="16" fill="#eee">B</text>
      <text x="782" y="667" fontSize="23" fill="#eee" fontFamily="Liberation Serif, Noto Sans CJK SC">4-1型</text>
    </svg>
  </div>
);

const arrows = [
  [863, 153, 746, 193],
  [502, 197, 578, 197],
  [105, 376, 276, 218],
  [1057, 548, 103, 377],
];

const Annotations = () => (
  <svg className="pointer-events-none absolute left-0 top-0 z-30" width="1449" height="708" viewBox="0 0 1449 708" fill="none">
    <g stroke="#e41212" strokeWidth="3">
      <ellipse cx="240" cy="160" rx="38" ry="21" transform="rotate(8 240 160)" />
      <ellipse cx="635" cy="195" rx="72" ry="45" />
      <ellipse cx="1101" cy="584" rx="119" ry="76" transform="rotate(-3 1101 584)" />
    </g>
    {arrows.map(([x1, y1, x2, y2]) => {
      const len = Math.hypot(x2 - x1, y2 - y1);
      const ux = (x2 - x1) / len;
      const uy = (y2 - y1) / len;
      const bx = x2 - ux * 18;
      const by = y2 - uy * 18;
      return (
        <g key={`${x1}-${y1}`}>
          <path d={`M${x1} ${y1}L${bx} ${by}`} stroke="#e81010" strokeWidth="3" />
          <polygon points={`${x2},${y2} ${bx - uy * 7},${by + ux * 7} ${bx + uy * 7},${by - ux * 7}`} fill="#e81010" />
        </g>
      );
    })}
    <g stroke="#de3c3c" strokeWidth="4" strokeLinecap="round">
      <path d="M1076 182C1085 176 1100 190 1106 200 1112 212 1112 226 1098 227 1084 228 1072 222 1072 205 1071 193 1072 186 1079 181" />
      <path d="M1216 182C1228 180 1238 190 1238 205 1238 222 1226 229 1213 228 1200 226 1195 212 1199 198 1202 189 1208 183 1222 183" />
      <path d="M1372 464C1390 462 1408 470 1410 490 1411 508 1400 520 1382 519 1368 518 1358 508 1355 495 1352 483 1358 470 1376 464" />
      <path d="M1051 599C1066 597 1078 605 1078 620 1078 632 1068 637 1058 636 1046 635 1039 624 1041 612 1043 604 1047 600 1056 599" />
      <path d="M1160 596C1172 596 1179 605 1179 616 1179 628 1170 633 1158 632 1147 631 1141 620 1142 610 1144 600 1150 596 1166 596" />
    </g>
  </svg>
);

export default function App() {
  return (
    <div className="relative flex h-[708px] w-[1449px] overflow-hidden bg-white font-['Liberation_Serif','Noto_Sans_CJK_SC',serif] text-[12px]">
      <AppWindow />
      <div className="w-[4px] bg-[#0c3fd0]" />
      <Browser />
      <StirrupPopup />
      <Annotations />
    </div>
  );
}
